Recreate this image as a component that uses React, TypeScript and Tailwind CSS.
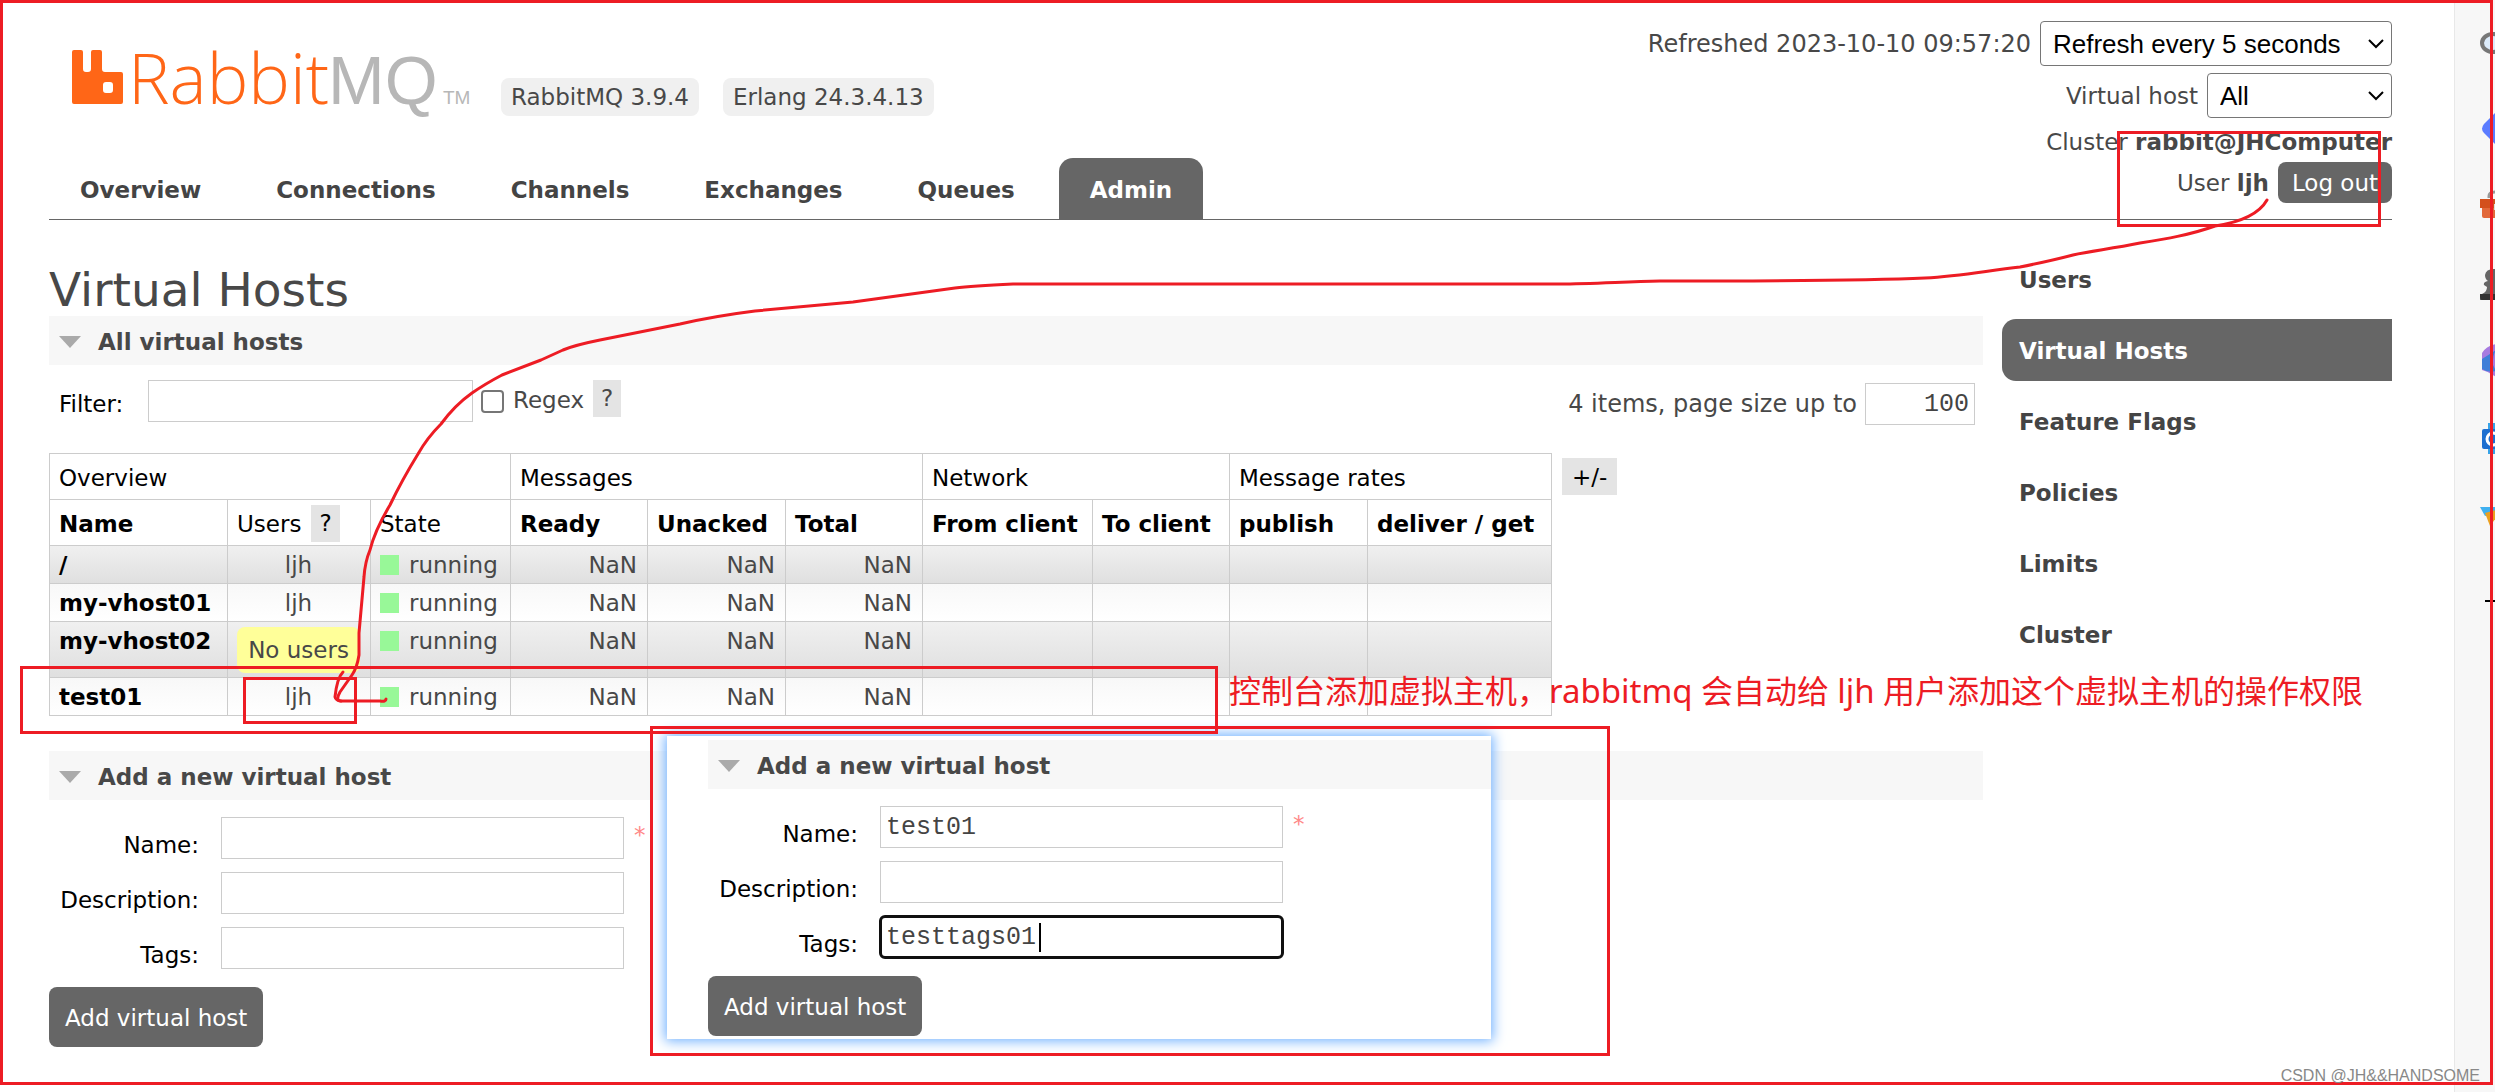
import { useState } from 'react';

interface VhostRow {
  name: string;
  user: string | null;
}

interface AddVhostFormProps {
  idPrefix: string;
  initialName?: string;
  initialTags?: string;
  showCaret?: boolean;
}

const tabs = ['Overview', 'Connections', 'Channels', 'Exchanges', 'Queues', 'Admin'];

const adminLinks = ['Users', 'Virtual Hosts', 'Feature Flags', 'Policies', 'Limits', 'Cluster'];

const vhosts: VhostRow[] = [
  { name: '/', user: 'ljh' },
  { name: 'my-vhost01', user: 'ljh' },
  { name: 'my-vhost02', user: null },
  { name: 'test01', user: 'ljh' },
];

const inputClass =
  'border border-[#ccc] bg-white px-[5px] font-["Liberation_Mono",monospace] text-[25px] leading-[30px] text-[#444]';

function Logo() {
  return (
    <a href="#" aria-label="RabbitMQ" className="block">
      <svg width="402" height="60" viewBox="0 0 402 60" className="overflow-visible" role="img" aria-label="RabbitMQ logo">
        <path
          fill="#ff6617"
          fillRule="evenodd"
          d="M2 0h7q2 0 2 2v17q0 3 3 3h2q3 0 3-3V2q0-2 2-2h7q2 0 2 2v17q0 3 3 3h16q2 0 2 2v28q0 2-2 2H2q-2 0-2-2V2Q0 0 2 0zM34 32q-3 0-3 3v5q0 3 3 3h4q3 0 3-3v-5q0-3-3-3z"
        />
        <text x="56" y="54" fill="#ff6617" className='font-["Open_Sans",sans-serif] text-[70px] font-light'>
          Rabbit
        </text>
        <text x="256" y="54" fill="#b7b7b7" className='font-["Liberation_Sans",sans-serif] text-[68px]'>
          MQ
        </text>
        <text x="371" y="54" fill="#b7b7b7" className='font-["Liberation_Sans",sans-serif] text-[19px]'>
          TM
        </text>
      </svg>
    </a>
  );
}

function HelpButton() {
  return (
    <button type="button" aria-label="Help" className="h-[37px] bg-[#e4e4e4] px-2 leading-[37px]">
      ?
    </button>
  );
}

function SectionHeading({ title }: { title: string }) {
  return (
    <h2 className="flex h-[49px] items-center gap-[17px] bg-[#f7f7f7] pt-[2px] pl-[10px] font-bold">
      <svg width="22" height="12" viewBox="0 0 22 12" aria-hidden="true">
        <path d="M0 0h22L11 12z" fill="#aaa" />
      </svg>
      {title}
    </h2>
  );
}

function AddVhostForm({ idPrefix, initialName = '', initialTags = '', showCaret = false }: AddVhostFormProps) {
  const [name, setName] = useState(initialName);
  const [description, setDescription] = useState('');
  const [tags, setTags] = useState(initialTags);

  const fields = [
    { key: 'name', label: 'Name:', value: name, onChange: setName, required: true },
    { key: 'description', label: 'Description:', value: description, onChange: setDescription },
    { key: 'tags', label: 'Tags:', value: tags, onChange: setTags, focused: showCaret },
  ];

  return (
    <form onSubmit={(e) => e.preventDefault()}>
      <div className="flex flex-col gap-3 pt-[17px]">
        {fields.map((field) => (
          <div key={field.key} className="flex h-[43px] items-start">
            <label
              htmlFor={`${idPrefix}-${field.key}`}
              className="w-[172px] shrink-0 pt-[14px] pr-[22px] text-right leading-[28px] text-black"
            >
              {field.label}
            </label>
            <div className="relative">
              <input
                id={`${idPrefix}-${field.key}`}
                type="text"
                value={field.value}
                onChange={(e) => field.onChange(e.target.value)}
                className={`${inputClass} h-[42px] w-[403px] ${
                  field.focused ? 'rounded-[5px] outline-3 -outline-offset-2 outline-[#101010]' : ''
                }`}
              />
              {field.focused && <span className="absolute top-[7px] left-[159px] h-[29px] w-[2px] bg-black" />}
            </div>
            {field.required && <span className="pt-1 pl-[10px] text-[#ff8888]">*</span>}
          </div>
        ))}
      </div>
      <button type="submit" className="mt-[17px] h-[60px] rounded-lg bg-[#666] px-4 pt-[2px] text-white">
        Add virtual host
      </button>
    </form>
  );
}

function VhostTable() {
  const group = 'border border-[#ccc] pt-[2px] pr-[10px] pl-[9px] text-left font-normal';
  const head = 'border border-[#ccc] pt-[2px] pr-[10px] pl-[9px] text-left font-bold';
  const cell = 'border border-[#ccc] pr-[10px] pl-[9px] pt-[5px] pb-[4px] align-top';

  return (
    <table className="w-[1503px] table-fixed border-collapse leading-[28px]">
      <colgroup>
        <col className="w-[178px]" />
        <col className="w-[143px]" />
        <col className="w-[140px]" />
        <col className="w-[137px]" />
        <col className="w-[138px]" />
        <col className="w-[137px]" />
        <col className="w-[170px]" />
        <col className="w-[137px]" />
        <col className="w-[138px]" />
        <col />
      </colgroup>
      <thead className="text-black">
        <tr className="h-[46px]">
          <th colSpan={3} className={group}>Overview</th>
          <th colSpan={3} className={group}>Messages</th>
          <th colSpan={2} className={group}>Network</th>
          <th colSpan={2} className={group}>Message rates</th>
        </tr>
        <tr className="h-[46px] whitespace-nowrap">
          <th className={head}>Name</th>
          <th className={group}>
            <span className="flex items-center gap-[10px]">
              Users <HelpButton />
            </span>
          </th>
          <th className={group}>State</th>
          <th className={head}>Ready</th>
          <th className={head}>Unacked</th>
          <th className={head}>Total</th>
          <th className={head}>From client</th>
          <th className={head}>To client</th>
          <th className={head}>publish</th>
          <th className={head}>deliver / get</th>
        </tr>
      </thead>
      <tbody>
        {vhosts.map((row, index) => (
          <tr
            key={row.name}
            className={
              index % 2 === 0
                ? 'bg-linear-to-b from-[#f0f0f0] to-[#dfdfdf]'
                : 'bg-linear-to-b from-[#f8f8f8] to-white'
            }
          >
            <td className={`${cell} font-bold whitespace-nowrap text-black`}>
              <a href="#">{row.name}</a>
            </td>
            <td className={`${cell} text-center whitespace-nowrap`}>
              {row.user ?? <p className="rounded-lg bg-[#ffff99] py-[9px]">No users</p>}
            </td>
            <td className={cell}>
              <span className="flex items-center gap-[10px]">
                <span className="h-5 w-[19px] bg-[#98f898]" />
                running
              </span>
            </td>
            {['ready', 'unacked', 'total'].map((column) => (
              <td key={column} className={`${cell} text-right`}>NaN</td>
            ))}
            {['from', 'to', 'publish', 'deliver'].map((column) => (
              <td key={column} className={cell} />
            ))}
          </tr>
        ))}
      </tbody>
    </table>
  );
}

function SelectBox({ id, options, className }: { id: string; options: string[]; className: string }) {
  return (
    <span className="relative block">
      <select
        id={id}
        className={`h-[45px] appearance-none rounded-[4px] border border-[#767676] bg-white pl-3 font-["Liberation_Sans",sans-serif] text-[26px] text-black ${className}`}
      >
        {options.map((option) => (
          <option key={option}>{option}</option>
        ))}
      </select>
      <svg className="pointer-events-none absolute top-[18px] right-2 h-[10px] w-4" viewBox="0 0 16 10" aria-hidden="true">
        <path d="M1 1l7 7 7-7" fill="none" stroke="#000" strokeWidth="2" />
      </svg>
    </span>
  );
}

function StatusPanel() {
  return (
    <div className="flex flex-col items-end pt-[21px] whitespace-nowrap">
      <div className="flex items-center gap-[9px]">
        <label htmlFor="refresh" className="text-2xl">Refreshed 2023-10-10 09:57:20</label>
        <SelectBox id="refresh" options={['Refresh every 5 seconds']} className="w-[352px]" />
      </div>
      <div className="mt-[7px] flex items-center gap-[9px]">
        <label htmlFor="vhost">Virtual host</label>
        <SelectBox id="vhost" options={['All', '/', 'my-vhost01']} className="w-[185px]" />
      </div>
      <div className="mt-[10px] leading-[28px]">
        Cluster <b>rabbit@JHComputer</b>
      </div>
      <div className="mt-[6px] flex items-center gap-[9px]">
        <span>
          User <b>ljh</b>
        </span>
        <button type="button" className="h-[41px] rounded-lg bg-[#666] px-[14px] text-white">
          Log out
        </button>
      </div>
    </div>
  );
}

/* Strip of app shortcuts that runs along the window's right edge */
function BrowserRail() {
  return (
    <aside className="relative w-[41px] shrink-0 overflow-hidden border-l border-[#e8e8e8] bg-[#f7f7f7]">
      <svg width="41" height="640" viewBox="2454 0 41 640" aria-hidden="true">
        <ellipse cx="2492" cy="43" rx="11" ry="9" fill="#dcebfa" stroke="#777" strokeWidth="4" />
        <path d="M2495 112l-12 12q-4 5 0 9l12 12z" fill="#5b7cff" />
        <path d="M2488 198v-2q0-4 7-4" fill="none" stroke="#999" strokeWidth="3" />
        <path d="M2479 199h16v9h-16z" fill="#d3501c" />
        <path d="M2481 208h14v10h-12q-2 0-2-2z" fill="#e2693a" />
        <path d="M2493 204h2v6h-2z" fill="#ddd" />
        <path d="M2495 269q-10-1-11 6 0 4 3 6-5 1-4 4l3 2q0 5-5 7-2 2-2 6h16z" fill="#666" />
        <path d="M2479 294h16v6h-14q-2 0-2-3z" fill="#333" />
        <path d="M2495 344q-10 2-14 9v17q8 2 14 7z" fill="#a77be0" />
        <path d="M2495 350q-4 6-3 15l3 6q-8 2-14-2v-10z" fill="#3f7fd8" />
        <path d="M2487 423h8v31h-8z" fill="#36a3e8" />
        <path d="M2483 429h12v20h-12q-2 0-2-2v-16q0-2 2-2z" fill="#1d6fd0" />
        <ellipse cx="2492" cy="439" rx="6" ry="6" fill="none" stroke="#fff" strokeWidth="3" />
        <path d="M2479 507h16v6l-11 3z" fill="#3fb0f0" />
        <path d="M2484 513l11-3v8l-6 8z" fill="#eba01f" />
        <path d="M2484 601h11" stroke="#000" strokeWidth="2" />
      </svg>
    </aside>
  );
}

/* Hand-drawn marks and the pasted window that lie over the console page */
function Annotations() {
  const box = 'pointer-events-none absolute border-3 border-[#ed1c24]';

  return (
    <>
      <section className="absolute top-[736px] left-[667px] w-[824px] bg-white pt-1 pb-[3px] pl-[41px] shadow-[0_0_12px_2px_#6fb0ff]">
        <SectionHeading title="Add a new virtual host" />
        <AddVhostForm idPrefix="pasted" initialName="test01" initialTags="testtags01" showCaret />
      </section>
      <div className={`${box} top-[131px] left-[2117px] h-[96px] w-[264px]`} />
      <div className={`${box} top-[666px] left-[20px] h-[68px] w-[1198px]`} />
      <div className={`${box} top-[677px] left-[243px] h-[47px] w-[114px]`} />
      <div className={`${box} top-[726px] left-[650px] h-[330px] w-[960px]`} />
      <p className='absolute top-[667px] left-[1229px] font-["Noto_Sans","Noto_Sans_CJK_SC",sans-serif] text-[32px] leading-[48px] whitespace-nowrap text-[#ed1c24]'>
        控制台添加虚拟主机，<span className="text-[33px]">rabbitmq</span> 会自动给{' '}
        <span className="text-[33px]">ljh</span> 用户添加这个虚拟主机的操作权限
      </p>
      <svg
        className="pointer-events-none absolute top-0 left-0"
        width="2495"
        height="1092"
        viewBox="0 0 2495 1092"
        fill="none"
        stroke="#ed1c24"
        strokeWidth="3"
        strokeLinecap="round"
        strokeLinejoin="round"
        aria-hidden="true"
      >
        <path d="M2267 200C2258 216 2235 223 2215 226C2190 235 2165 239 2140 243C2110 249 2090 251 2073 255C2050 261 2035 264 2020 267C1985 271 1960 276 1925 278C1880 280 1830 281 1660 281C1620 282 1590 284 1560 284H1013C990 285 970 286 955 288L853 302L755 311Q715 316 680 324L600 340Q575 345 563 350L541 360L502 375Q485 384 472 393Q455 405 441 424Q427 438 418 454Q402 480 390 505Q375 530 370 550Q365 562 364 577L359 633V655Q357 668 352 675L340 692Q335 701 341 701H380Q386 702 386 699" />
        <path d="M343 672Q337 678 335 697Q336 701 341 701" />
      </svg>
      <div className={`${box} top-0 left-0 h-[1085px] w-[2493px]`} />
      <span className='absolute right-[15px] bottom-1 font-["Liberation_Sans",sans-serif] text-base leading-6 text-[#888]'>
        CSDN @JH&amp;&amp;HANDSOME
      </span>
    </>
  );
}

export default function App() {
  return (
    <div className='relative flex min-h-screen bg-white font-["DejaVu_Sans",sans-serif] text-[23px] leading-[28px] text-[#484848]'>
      <div className="min-w-0 flex-1 pr-[62px] pl-[49px]">
        <header className="flex h-[220px] items-stretch justify-between border-b border-[#666]">
          <div className="flex flex-col justify-between">
            <div className="flex items-start pt-[50px] pl-[23px]">
              <Logo />
              <div className="mt-7 ml-[27px] flex gap-6 leading-[38px]">
                <span className="rounded-lg bg-[#f0f0f0] px-[10px]">RabbitMQ 3.9.4</span>
                <span className="rounded-lg bg-[#f0f0f0] px-[10px]">Erlang 24.3.4.13</span>
              </div>
            </div>
            <nav className="flex gap-[13px] font-bold">
              {tabs.map((tab) => (
                <a
                  key={tab}
                  href="#"
                  className={`h-[61px] rounded-t-[14px] px-[31px] leading-[64px] ${
                    tab === 'Admin' ? 'bg-[#666] text-white' : 'text-[#444]'
                  }`}
                >
                  {tab}
                </a>
              ))}
            </nav>
          </div>
          <StatusPanel />
        </header>

        <div className="flex items-start gap-[19px]">
          <main className="min-w-0 flex-1">
            <h1 className="pt-[44px] text-[47px] leading-[52px]">Virtual Hosts</h1>
            <SectionHeading title="All virtual hosts" />

            <div className="flex h-[88px] items-start justify-between pt-[15px]">
              <div className="flex items-start pl-[10px]">
                <label htmlFor="filter" className="w-[89px] pt-[10px] text-black">Filter:</label>
                <input id="filter" type="text" className={`${inputClass} h-[42px] w-[325px]`} />
                <input
                  id="regex"
                  type="checkbox"
                  className="mt-[10px] ml-2 size-[23px] appearance-none rounded-[4px] border-2 border-[#767676] bg-white"
                />
                <label htmlFor="regex" className="pt-[6px] pr-[9px] pl-[9px]">Regex</label>
                <HelpButton />
              </div>
              <div className="flex items-center gap-2 pt-[3px] pr-2">
                <label htmlFor="page-size" className="text-2xl">4 items, page size up to</label>
                <input id="page-size" type="text" defaultValue="100" className={`${inputClass} h-[42px] w-[110px] text-right`} />
              </div>
            </div>

            <div className="flex items-start gap-[10px]">
              <VhostTable />
              <button type="button" className="mt-[5px] h-[37px] bg-[#e4e4e4] px-[10px] text-black">
                +/-
              </button>
            </div>

            <div className="mt-[35px]">
              <SectionHeading title="Add a new virtual host" />
              <AddVhostForm idPrefix="add" />
            </div>
          </main>

          <nav className="flex w-[390px] shrink-0 flex-col gap-[9px] pt-[28px] font-bold">
            {adminLinks.map((link) => (
              <a
                key={link}
                href="#"
                className={`h-[62px] rounded-l-[14px] pl-[17px] leading-[65px] ${
                  link === 'Virtual Hosts' ? 'bg-[#666] text-white' : 'text-[#444]'
                }`}
              >
                {link}
              </a>
            ))}
          </nav>
        </div>
      </div>
      <BrowserRail />
      <Annotations />
    </div>
  );
}
